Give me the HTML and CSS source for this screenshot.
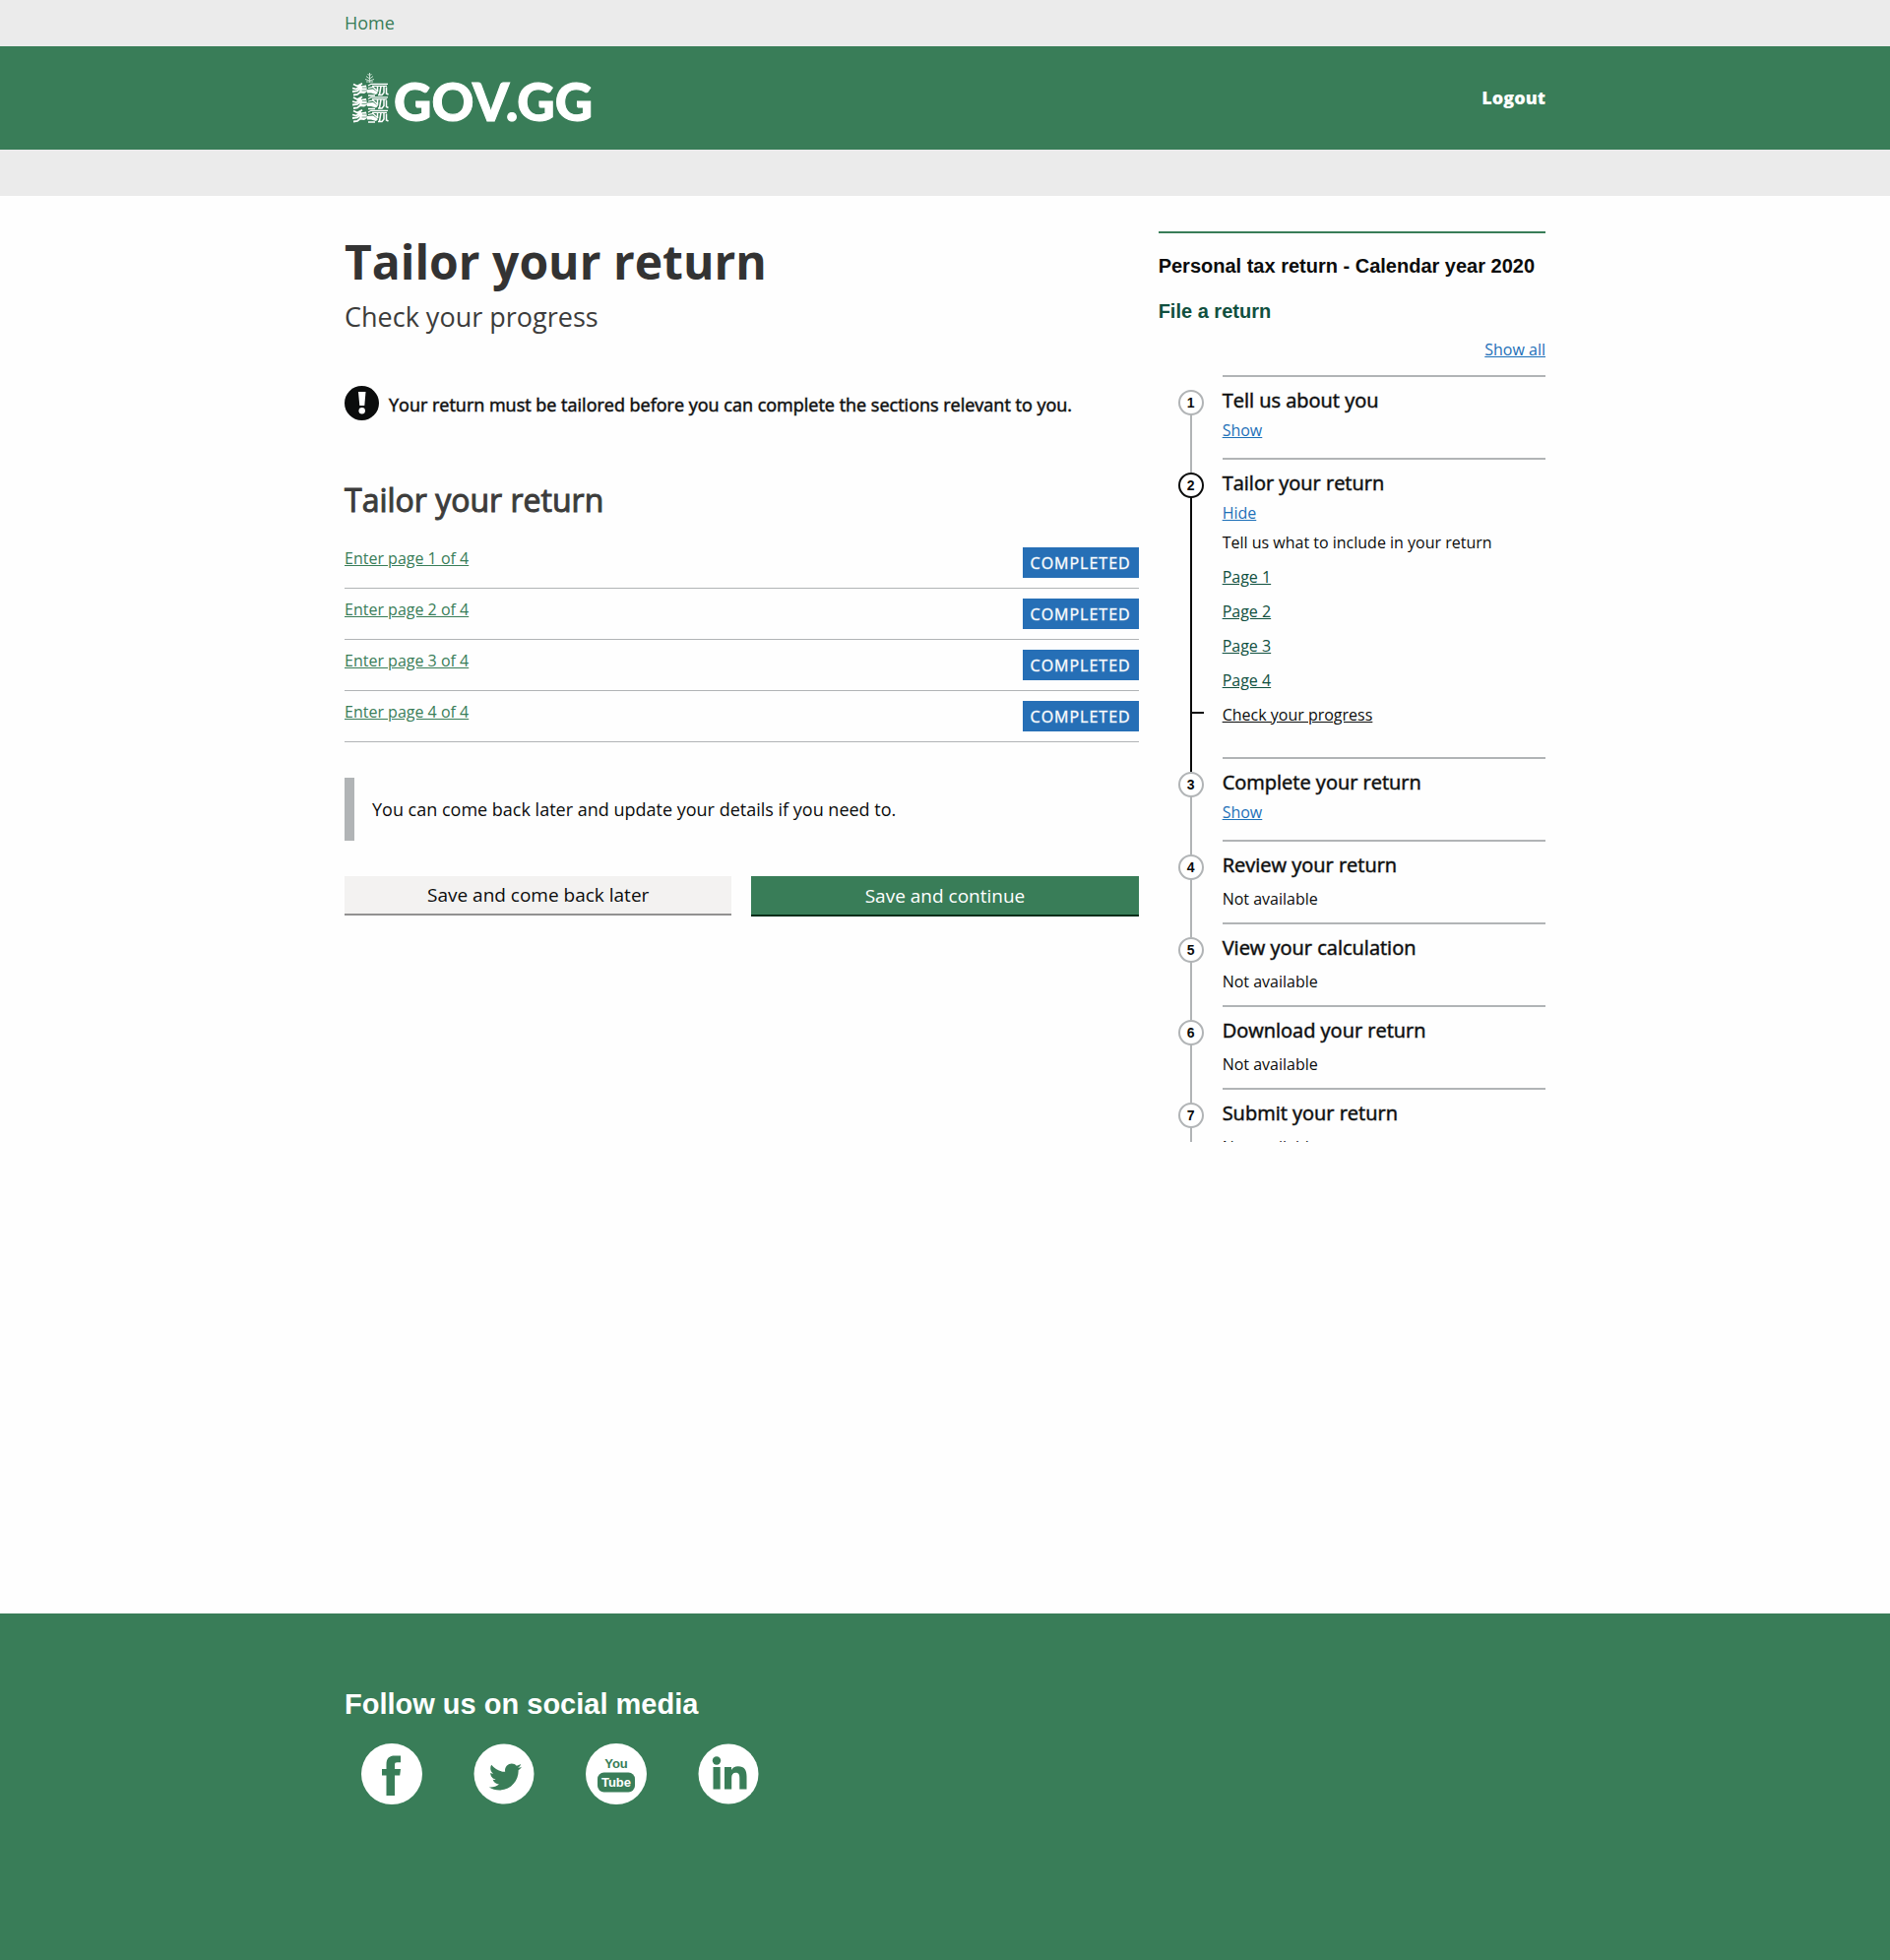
FILE: index.html
```html
<!DOCTYPE html>
<html lang="en">
<head>
<meta charset="utf-8">
<meta name="viewport" content="width=device-width, initial-scale=1">
<title>Tailor your return</title>
<link rel="stylesheet" href="styles.css">
</head>
<body>
<nav class="topbar" aria-label="Breadcrumb">
  <div class="container"><a class="topbar-link" href="#">Home</a></div>
</nav>
<header class="header">
  <div class="container header-row">
    <a class="logo" href="#">
      <svg class="logo-crest" viewBox="0 0 38 52" width="38" height="52" aria-hidden="true">
        <defs>
          <g id="lion" fill="none" stroke="#fff">
            <path d="M2 1.500L6 3.500L11 .8M1 5.500L5 6.500L10 3M1 9L6 8.500L10 5M2 12.500L6 12L9 9.500" stroke-width="1.800"/>
            <path d="M9 3.500L15 2.500L16 9L13 11L8 10.500Z" fill="#fff" stroke="none"/>
            <path d="M11 5h4M10.500 8h5" stroke="#397d58" stroke-width=".7"/>
            <path d="M17 3L20 1.300H37M21 3.300H36M17 5.500L22 4.500L27 9" stroke-width="1.200"/>
            <path d="M16 7L22 6.500L27 10L25 12L20 10.500L16 10.500Z" fill="#fff" stroke="none"/>
            <path d="M26.500 3.500V9M30 3.500L28.500 12M33 3.500V10L31 12.500H27M35.500 4.500V11L37.500 12M17 13h7" stroke-width="1.500"/>
          </g>
        </defs>
        <path d="M18.500 11V1M18.500 4l-2-2M18.500 4l2-2M18.500 7l-3.500-2.500M18.500 7l3.500-2.500M18.500 9L14 7.500M18.500 9L23 7.500M15 10h7" fill="none" stroke="#c9dfd2" stroke-width="1"/>
        <use href="#lion" y="11"/>
        <use href="#lion" y="24.500"/>
        <use href="#lion" y="38"/>
      </svg>
      <span class="logo-text">GOV.GG</span>
    </a>
    <a class="header-link" href="#">Logout</a>
  </div>
</header>
<div class="subbar"></div>

<div class="container page">
  <main class="main">
    <h1 class="title">Tailor your return</h1>
    <p class="subtitle">Check your progress</p>
    <div class="warning">
      <svg class="warning-icon" viewBox="0 0 35 35" width="35" height="35" aria-hidden="true">
        <circle cx="17.500" cy="17.500" r="17.500" fill="#0b0c0c"/>
        <path d="M14 6h7.500l-1.200 14h-5z" fill="#fff"/>
        <circle cx="17.700" cy="25.300" r="3.200" fill="#fff"/>
      </svg>
      <strong class="warning-text">Your return must be tailored before you can complete the sections relevant to you.</strong>
    </div>

    <h2 class="section-title">Tailor your return</h2>
    <ul class="tasks">
      <li class="task"><a class="task-link" href="#">Enter page 1 of 4</a><strong class="tag">COMPLETED</strong></li>
      <li class="task"><a class="task-link" href="#">Enter page 2 of 4</a><strong class="tag">COMPLETED</strong></li>
      <li class="task"><a class="task-link" href="#">Enter page 3 of 4</a><strong class="tag">COMPLETED</strong></li>
      <li class="task"><a class="task-link" href="#">Enter page 4 of 4</a><strong class="tag">COMPLETED</strong></li>
    </ul>

    <p class="inset">You can come back later and update your details if you need to.</p>

    <div class="actions">
      <button class="button button-secondary" type="button">Save and come back later</button>
      <button class="button button-primary" type="button">Save and continue</button>
    </div>
  </main>

  <aside class="sidebar">
    <h2 class="sidebar-title">Personal tax return - Calendar year 2020</h2>
    <h2 class="sidebar-title sidebar-title-green">File a return</h2>
    <div class="show-all"><button class="text-button" type="button">Show all</button></div>
    <ol class="steps">
      <li class="step">
        <span class="step-number">1</span>
        <div class="step-body">
          <h3 class="step-title">Tell us about you</h3>
          <div class="step-toggle"><button class="text-button" type="button">Show</button></div>
        </div>
      </li>
      <li class="step step-active">
        <span class="step-number">2</span>
        <div class="step-body">
          <h3 class="step-title">Tailor your return</h3>
          <div class="step-toggle step-toggle-open"><button class="text-button" type="button">Hide</button></div>
          <ul class="step-pages">
            <li>Tell us what to include in your return</li>
            <li><a class="page-link" href="#">Page 1</a></li>
            <li><a class="page-link" href="#">Page 2</a></li>
            <li><a class="page-link" href="#">Page 3</a></li>
            <li><a class="page-link" href="#">Page 4</a></li>
            <li class="current"><a class="page-link page-link-current" href="#">Check your progress</a></li>
          </ul>
        </div>
      </li>
      <li class="step">
        <span class="step-number">3</span>
        <div class="step-body">
          <h3 class="step-title">Complete your return</h3>
          <div class="step-toggle"><button class="text-button" type="button">Show</button></div>
        </div>
      </li>
      <li class="step">
        <span class="step-number">4</span>
        <div class="step-body">
          <h3 class="step-title">Review your return</h3>
          <p class="step-note">Not available</p>
        </div>
      </li>
      <li class="step">
        <span class="step-number">5</span>
        <div class="step-body">
          <h3 class="step-title">View your calculation</h3>
          <p class="step-note">Not available</p>
        </div>
      </li>
      <li class="step">
        <span class="step-number">6</span>
        <div class="step-body">
          <h3 class="step-title">Download your return</h3>
          <p class="step-note">Not available</p>
        </div>
      </li>
      <li class="step">
        <span class="step-number">7</span>
        <div class="step-body">
          <h3 class="step-title">Submit your return</h3>
          <p class="step-note">Not available</p>
        </div>
      </li>
    </ol>
  </aside>
</div>

<footer class="footer">
  <div class="container">
    <h2 class="footer-title">Follow us on social media</h2>
    <ul class="social">
      <li><a class="social-link" href="#" aria-label="Facebook">
        <svg viewBox="0 0 62 62" width="62" height="62">
          <circle cx="31" cy="31" r="31" fill="#fff"/>
          <path d="M25.500 53V32.500H21V26h4.500v-4.500C25.500 15 28.500 12.500 34 12.500H40v6.700H36.500c-2 0-2.500.8-2.500 2.500V26h6l-.8 6.500H34V53z" fill="#397d58"/>
        </svg></a></li>
      <li><a class="social-link" href="#" aria-label="Twitter">
        <svg viewBox="0 0 62 62" width="62" height="62">
          <circle cx="31" cy="31" r="30.500" fill="#fff"/>
          <path transform="translate(14.500 16.500) scale(1.460)" fill="#397d58" d="M23.643 4.937c-.835.370-1.732.620-2.675.733.962-.576 1.700-1.490 2.048-2.578-.900.534-1.897.922-2.958 1.130-.850-.904-2.060-1.470-3.400-1.470-2.572 0-4.658 2.086-4.658 4.660 0 .364.042.718.120 1.060-3.873-.195-7.304-2.050-9.602-4.868-.400.690-.630 1.490-.630 2.342 0 1.616.823 3.043 2.072 3.878-.764-.025-1.482-.234-2.110-.583v.060c0 2.257 1.605 4.140 3.737 4.568-.392.106-.803.162-1.227.162-.300 0-.593-.028-.877-.082.593 1.850 2.313 3.198 4.352 3.234-1.595 1.250-3.604 1.995-5.786 1.995-.376 0-.747-.022-1.112-.065 2.062 1.323 4.510 2.093 7.140 2.093 8.570 0 13.255-7.098 13.255-13.254 0-.200-.005-.402-.014-.602.910-.658 1.700-1.477 2.323-2.410z"/>
        </svg></a></li>
      <li><a class="social-link" href="#" aria-label="YouTube">
        <svg viewBox="0 0 62 62" width="62" height="62">
          <circle cx="31" cy="31" r="31" fill="#fff"/>
          <rect x="12" y="29.500" width="38" height="20" rx="6.500" fill="#397d58"/>
          <text class="youtube-text" x="31" y="25" text-anchor="middle" fill="#397d58">You</text>
          <text class="youtube-text" x="31" y="44" text-anchor="middle" fill="#fff">Tube</text>
        </svg></a></li>
      <li><a class="social-link" href="#" aria-label="LinkedIn">
        <svg viewBox="0 0 62 62" width="62" height="62">
          <circle cx="31" cy="31" r="30.500" fill="#fff"/>
          <circle cx="19" cy="17.500" r="4.200" fill="#397d58"/>
          <path d="M15.500 24h7.200v22.500h-7.200zM27 24h7v3c1.200-2.300 3.500-3.700 6.800-3.700 6.500 0 8.700 4 8.700 10.200v13h-7.200V35c0-3.200-.8-5.300-3.800-5.300-3 0-4.300 2-4.300 5.300v11.500H27z" fill="#397d58"/>
        </svg></a></li>
    </ul>
  </div>
</footer>
</body>
</html>
```

FILE: styles.css
```css
* {
  box-sizing: border-box;
}

body {
  display: flex;
  flex-direction: column;
  min-height: 100vh;
  margin: 0;
  background: #fefefe;
  color: #0b0c0c;
  font-family: "Open Sans", sans-serif;
  font-size: 16px;
  line-height: 22px;
}

h1, h2, h3, p, ul, ol {
  margin: 0;
  padding: 0;
}

ul, ol {
  list-style: none;
}

.container {
  width: 100%;
  max-width: 1260px;
  margin: 0 auto;
  padding: 0 20px;
}

/* Header */

.topbar {
  background: #ebebeb;
  font-size: 18px;
  line-height: 47px;
}

.topbar-link {
  color: #397d58;
  text-decoration: none;
}

.header {
  background: #397d58;
}

.header-row {
  display: flex;
  align-items: center;
  justify-content: space-between;
  height: 105px;
  padding-bottom: 2px;
}

.logo {
  display: flex;
  align-items: center;
  gap: 5px;
  padding-left: 7px;
  color: #fff;
  text-decoration: none;
}

.logo-crest {
  display: block;
}

.logo-text {
  padding-top: 8px;
  font-family: Lato, sans-serif;
  font-size: 53px;
  font-weight: 900;
  line-height: 60px;
  -webkit-text-stroke: 1px #fff;
}

.header-link {
  color: #fff;
  font-size: 18px;
  font-weight: 800;
  text-decoration: none;
}

.subbar {
  height: 47px;
  background: #ebebeb;
}

/* Page */

.page {
  display: grid;
  flex: 1;
  grid-template-columns: repeat(3, 1fr);
  gap: 20px;
  align-items: start;
  padding-top: 36px;
  padding-bottom: 36px;
}

.main {
  grid-column: span 2;
}

.title {
  color: #333;
  font-size: 48px;
  font-weight: 700;
  line-height: 62px;
}

.subtitle {
  margin-top: 7px;
  color: #3c3c3b;
  font-size: 27px;
  line-height: 36px;
}

.warning {
  display: flex;
  gap: 10px;
  align-items: flex-start;
  margin-top: 52px;
}

.warning-icon {
  flex: none;
}

.warning-text {
  font-size: 18px;
  font-weight: 400;
  line-height: 38px;
  -webkit-text-stroke: 1px rgba(11, 12, 12, 0.5);
}

.section-title {
  margin-top: 58px;
  color: #3c3c3b;
  font-size: 32px;
  font-weight: 400;
  line-height: 40px;
  -webkit-text-stroke: 1px #3c3c3b;
}

.tasks {
  margin-top: 18px;
}

.task {
  display: flex;
  align-items: flex-start;
  justify-content: space-between;
  padding: 10px 0;
  border-bottom: 1px solid #b1b4b6;
}

.task-link {
  color: #397d58;
}

.tag {
  padding: 1px 8px 0;
  background: #266fb6;
  color: #fff;
  font-weight: 400;
  letter-spacing: 1px;
  line-height: 30px;
  -webkit-text-stroke: 1px rgba(255, 255, 255, 0.4);
}

.inset {
  margin-top: 36px;
  padding: 20px 18px;
  border-left: 10px solid #b1b4b6;
  font-size: 18px;
  line-height: 24px;
}

.actions {
  display: grid;
  grid-template-columns: 1fr 1fr;
  gap: 20px;
  align-items: start;
  margin-top: 36px;
}

.button {
  padding: 0 10px;
  border: 0;
  border-radius: 0;
  font-family: inherit;
  font-size: 19px;
  cursor: pointer;
}

.button-secondary {
  border-bottom: 2px solid #929191;
  background: #f3f2f1;
  color: #0b0c0c;
  line-height: 38px;
}

.button-primary {
  padding-top: 1px;
  border-bottom: 2px solid #002d18;
  background: #397d58;
  color: #fff;
  line-height: 38px;
}

/* Step by step navigation */

.sidebar {
  max-height: 925px;
  padding-top: 21px;
  border-top: 2px solid #397d58;
  overflow: hidden;
}

.sidebar-title {
  font-family: "Liberation Sans", sans-serif;
  font-size: 20px;
  font-weight: 700;
  line-height: 24px;
}

.sidebar-title-green {
  margin-top: 22px;
  color: #10503f;
}

.show-all {
  margin-top: 16px;
  margin-bottom: 15px;
  text-align: right;
}

.text-button {
  display: block;
  padding: 0;
  border: 0;
  background: none;
  color: #1d70b8;
  font: inherit;
  text-decoration: underline;
  cursor: pointer;
}

.show-all .text-button {
  margin-left: auto;
}

.step {
  position: relative;
  padding-left: 65px;
}

/* Line that joins a step's number to the next one */
.step::before {
  content: "";
  position: absolute;
  top: 28px;
  bottom: -15px;
  left: 32px;
  width: 2px;
  background: #b1b4b6;
}

.step-active::before {
  background: #0b0c0c;
}

.step-number {
  position: absolute;
  top: 15px;
  left: 20px;
  width: 26px;
  height: 26px;
  border: 2px solid #b1b4b6;
  border-radius: 50%;
  background: #fff;
  font-family: "Liberation Sans", sans-serif;
  font-size: 14px;
  font-weight: 700;
  line-height: 22px;
  text-align: center;
}

.step-active .step-number {
  border-color: #0b0c0c;
}

.step-body {
  display: flow-root;
  padding-top: 11px;
  border-top: 2px solid #b1b4b6;
}

.step-title {
  font-size: 20px;
  font-weight: 400;
  line-height: 26px;
  -webkit-text-stroke: 1px rgba(11, 12, 12, 0.5);
}

.step-toggle {
  margin: 6px 0 17px;
}

.step-toggle-open {
  margin-bottom: 8px;
}

.step-note {
  margin: 10px 0 13px;
}

.step-pages {
  display: grid;
  gap: 13px;
  margin-bottom: 32px;
}

.page-link {
  color: #10503f;
}

.page-link-current {
  color: #0b0c0c;
}

.current {
  position: relative;
}

.current::before {
  content: "";
  position: absolute;
  top: 8px;
  left: -32px;
  width: 13px;
  height: 2px;
  background: #0b0c0c;
}

/* Footer */

.footer {
  padding: 74px 0 158px;
  background: #397d58;
}

.footer-title {
  color: #fff;
  font-family: "Liberation Sans", sans-serif;
  font-size: 29px;
  font-weight: 700;
  line-height: 36px;
}

.social {
  display: flex;
  flex-wrap: wrap;
  gap: 52px;
  margin-top: 22px;
  padding-left: 17px;
}

.social-link,
.social-link svg {
  display: block;
}

.youtube-text {
  font-family: "Liberation Sans", sans-serif;
  font-size: 13px;
  font-weight: 700;
}
```
